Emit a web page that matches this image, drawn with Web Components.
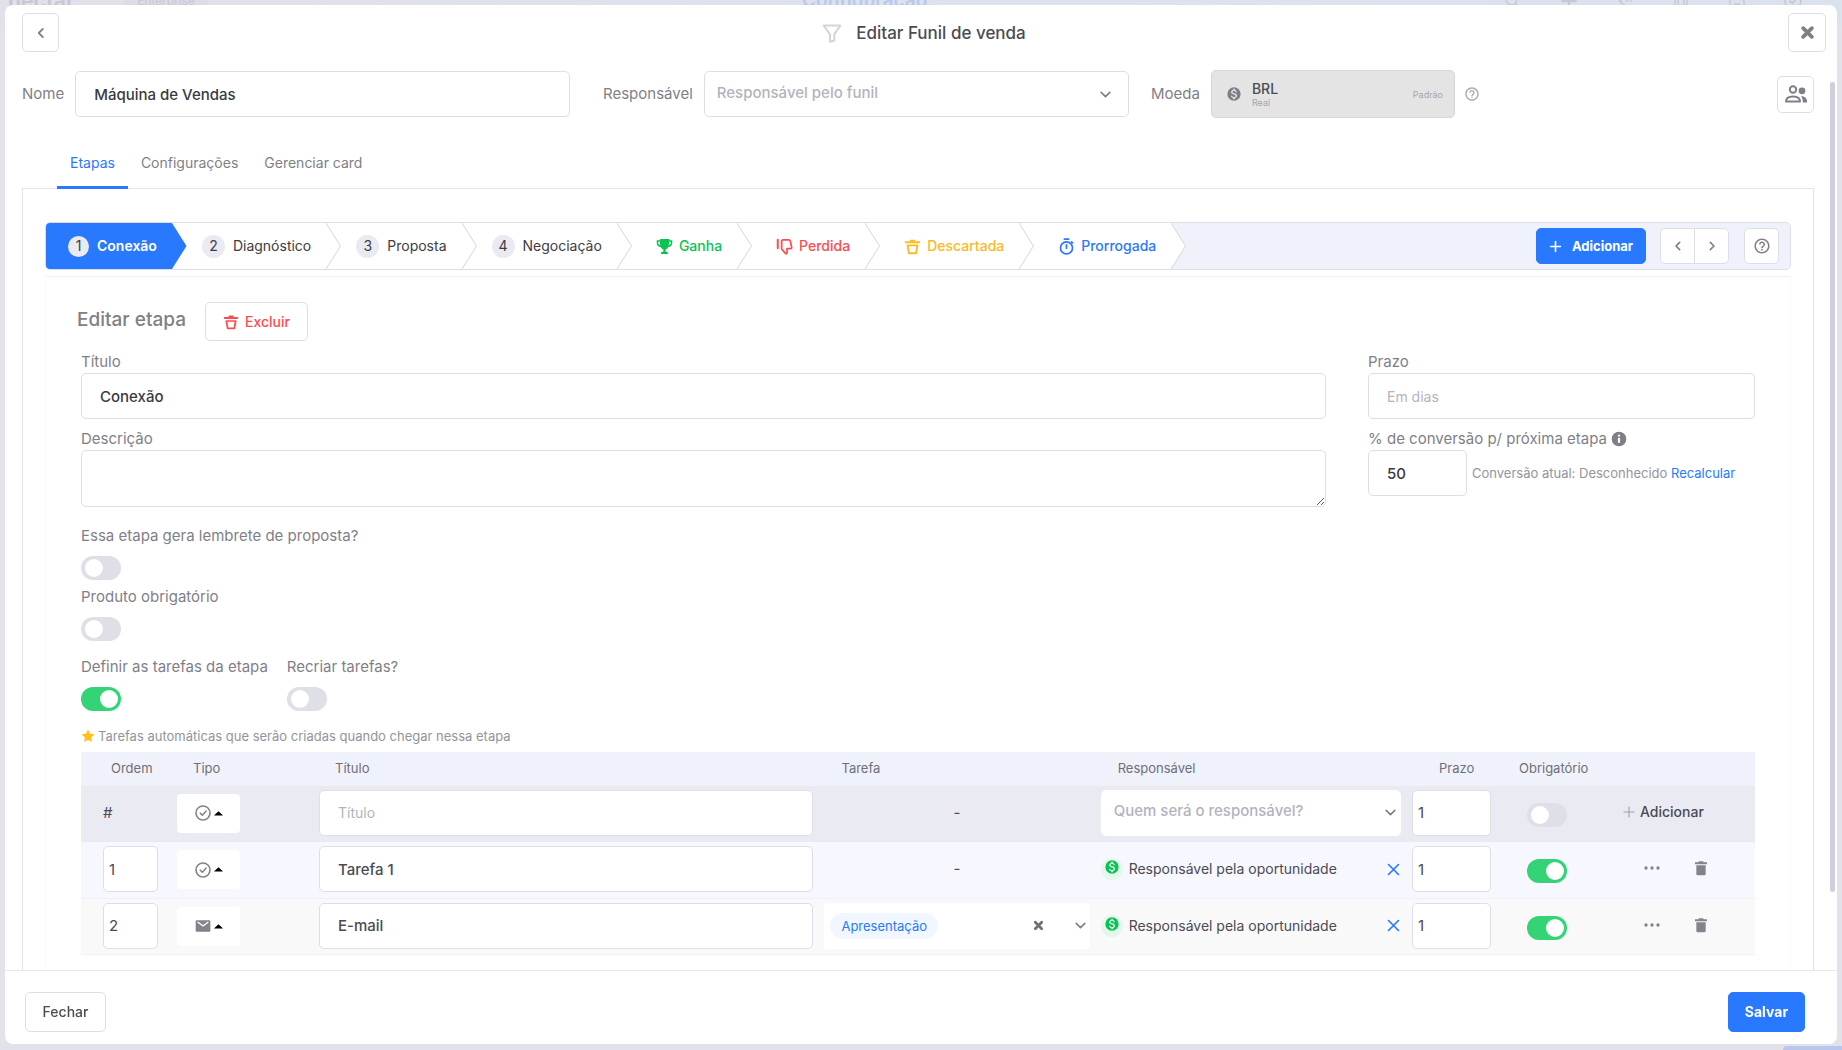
<!DOCTYPE html>
<html lang="pt-BR">
<head>
<meta charset="utf-8">
<title>Editar Funil de venda</title>
<style>
  html, body { height: 100%; }
  body {
    margin: 0;
    overflow: hidden;
    font-family: Inter, "Liberation Sans", sans-serif;
    font-size: 15px;
    line-height: 20px;
    color: #3f3f46;
    background: #e2e2eb;
    --line: #dedee7;
    --muted: #7f7f88;
    --soft: #b3b3bd;
    --ink: #3a3a40;
    --blue: #2979ff;
    --green: #34d375;
    --red: #ff4b4f;
  }
</style>
</head>
<body>
<app-backdrop></app-backdrop>
<funnel-dialog heading="Editar Funil de venda">
  <funnel-form slot="form"></funnel-form>
  <funnel-tabs slot="tabs"></funnel-tabs>
  <stage-panel slot="panel"></stage-panel>
</funnel-dialog>

<script>
const BASE = `
  *, *::before, *::after { box-sizing: border-box; }
  button, input, select, textarea { font: inherit; color: inherit; margin: 0; }
  button { cursor: pointer; padding: 0; border: 0; background: none; }
  input, select, textarea { outline: none; }
  ::placeholder { color: var(--soft); opacity: 1; }
`;

function define(name, render) {
  customElements.define(name, class extends HTMLElement {
    constructor() {
      super();
      this.attachShadow({ mode: 'open' });
    }
    connectedCallback() {
      const tpl = document.createElement('template');
      tpl.innerHTML = `<style>${BASE}</style>` + render(this);
      this.shadowRoot.replaceChildren(tpl.content.cloneNode(true));
    }
  });
}

const stroke = (d, w = 2) => `<path d="${d}" fill="none" stroke="currentColor" stroke-width="${w}" stroke-linecap="round" stroke-linejoin="round"/>`;
const fill = d => `<path d="${d}" fill="currentColor"/>`;
const ICONS = {
  left: stroke('M14.5 6.5 9 12l5.5 5.5', 2.4),
  right: stroke('M9.5 6.5 15 12l-5.5 5.5', 2.4),
  down: stroke('M4 8l8 8 8-8', 3),
  x: stroke('M4 4l16 16M20 4 4 20', 2.6),
  xbold: stroke('M5 5l14 14M19 5 5 19', 6),
  plus: stroke('M12 3v18M3 12h18', 3),
  plusthin: stroke('M12 2v20M2 12h20', 2.2),
  filter: `<path d="M2 3h20l-7.200 10.500v7.500l-5.200 1.500v-9z" fill="none" stroke="currentColor" stroke-width="2.400" stroke-linejoin="round"/>`,
  coin: fill('M12 2a10 10 0 1 0 0 20 10 10 0 0 0 0-20zm1.400 16.100V20h-2.700v-1.900c-1.700-.4-3.200-1.500-3.300-3.400h2c.1 1 .8 1.900 2.700 1.900 2 0 2.400-1 2.400-1.600 0-.9-.5-1.700-2.700-2.200-2.500-.6-4.200-1.600-4.200-3.700 0-1.700 1.400-2.800 3.100-3.200V4h2.700v1.900c1.900.5 2.800 1.900 2.900 3.400H14.300c0-1.100-.6-1.900-2.200-1.900-1.500 0-2.400.7-2.400 1.600 0 .8.600 1.400 2.700 1.900s4.200 1.400 4.200 3.900c0 1.800-1.400 2.900-3.200 3.300z'),
  help: fill('M11 18h2v-2h-2v2zm1-16C6.480 2 2 6.480 2 12s4.480 10 10 10 10-4.480 10-10S17.520 2 12 2zm0 18c-4.410 0-8-3.590-8-8s3.590-8 8-8 8 3.590 8 8-3.590 8-8 8zm0-14c-2.210 0-4 1.790-4 4h2c0-1.100.9-2 2-2s2 .9 2 2c0 2-3 1.750-3 5h2c0-2.250 3-2.500 3-5 0-2.210-1.790-4-4-4z'),
  info: fill('M12 1a11 11 0 1 0 0 22 11 11 0 0 0 0-22zm1.600 16.500h-3.200V10.200h3.200zm0-9.200h-3.200V5.500h3.200z'),
  people: `<circle cx="9" cy="7.500" r="3.200" fill="none" stroke="currentColor" stroke-width="2"/><circle cx="18" cy="8.800" r="3.400" fill="currentColor"/><path d="M2 19.500c0-3.800 2.600-5 7-5s7 1.200 7 5z" fill="none" stroke="currentColor" stroke-width="2" stroke-linejoin="round"/><path d="M17 14.200c3.800 0 6.200 1.800 6.200 6.300h-4.400c0-2.600-.4-4.600-1.800-6.300z" fill="currentColor"/>`,
  bin: stroke('M2.500 6h19', 2.8) + stroke('M9.500 3.600h5', 2.6) + `<path d="M5 10.500l2 11h10l2-11z" fill="none" stroke="currentColor" stroke-width="2.600" stroke-linejoin="round"/>`,
  trash: fill('M5 8h14v13a2 2 0 0 1-2 2H7a2 2 0 0 1-2-2zM3 3.500h5L9 2h6l1 1.500h5V6.500H3z'),
  trophy: fill('M18.500 3V1.500h-13V3H1v4c0 3.300 2.600 5.600 5.900 6 .9 1.700 2.100 2.800 3.600 3.200V19c-2 .2-3.500 1-3.500 2.700V22.500h10v-.8c0-1.700-1.500-2.500-3.500-2.700v-2.800c1.500-.4 2.700-1.500 3.600-3.200 3.300-.4 5.900-2.700 5.900-6V3zM3.200 7V5.200h2.300c0 2 .2 3.700.6 5.200C4.300 9.700 3.200 8.500 3.200 7zm17.600 0c0 1.500-1.100 2.700-2.900 3.400.4-1.500.6-3.200.6-5.200h2.300z'),
  thumb: stroke('M2.500 2.500v12', 2.8) + `<path d="M8 15.500V4.500a1.800 1.800 0 0 1 1.800-1.800h8.400a2 2 0 0 1 1.900 1.400l2 8.400c.3 1.400-.5 2.500-2 2.500h-4.600v6c0 .8-.5 1.300-1.200 1.300-.6 0-1-.3-1.300-.9z" fill="none" stroke="currentColor" stroke-width="2.400" stroke-linejoin="round"/>`,
  timer: stroke('M9 1.500h6', 2.6) + `<circle cx="12" cy="14" r="8.500" fill="none" stroke="currentColor" stroke-width="2.400"/>` + stroke('M12 9.500v5', 2.4) + stroke('M19 5.500l1.500 1.500', 2.4),
  check: `<circle cx="12" cy="12" r="10.500" fill="none" stroke="currentColor" stroke-width="2.400"/>` + stroke('M8 12.300l3 3 5.500-6', 2.4),
  mail: `<path fill="currentColor" d="M2.500 3.500h19a1.500 1.500 0 0 1 1.500 1.500v14a1.500 1.500 0 0 1-1.500 1.500h-19A1.500 1.500 0 0 1 1 19V5a1.500 1.500 0 0 1 1.500-1.500z"/><path d="M4 6l8 6 8-6" fill="none" stroke="#fff" stroke-width="2"/>`,
  caret: fill('M0 17 12 6l12 11z'),
  dots: fill('M3 9.500a2.500 2.500 0 1 0 0 5 2.500 2.500 0 0 0 0-5zm9 0a2.500 2.500 0 1 0 0 5 2.500 2.500 0 0 0 0-5zm9 0a2.500 2.500 0 1 0 0 5 2.500 2.500 0 0 0 0-5z'),
  star: fill('M12 1l3.300 7.200 7.700.9-5.700 5.400 1.500 7.800L12 18.400l-6.800 3.900 1.500-7.800L1 9.100l7.700-.9z'),
  search: `<circle cx="10" cy="10" r="7" fill="none" stroke="currentColor" stroke-width="2"/>` + stroke('M15.500 15.500 22 22'),
  phone: stroke('M4 8c0 6 7 11 16 12M4 8l3 5M14 12h1M19 12h1'),
  book: stroke('M4 2h4v20H4zM16 2h4v20h-4z'),
  bell: stroke('M2 20l1-9c1-5 4-8 9-8s8 3 9 8l1 9h-7v-4H9v4z'),
};

define('ui-icon', el => `
  <style>
    :host { display: inline-flex; flex: none; width: var(--size, 16px); height: var(--size, 16px); }
    svg { width: 100%; height: 100%; display: block; overflow: visible; }
  </style>
  <svg viewBox="0 0 24 24" aria-hidden="true">${ICONS[el.getAttribute('name')] || ''}</svg>`);

define('ui-button', el => `
  <style>
    :host { display: inline-flex; flex: none; }
    button {
      display: flex; align-items: center; justify-content: center;
      gap: var(--gap, 6px);
      min-width: var(--w, 0px);
      height: var(--h, 40px);
      border: 1px solid var(--line);
      border-radius: 5px;
      background: #fff;
      color: var(--fg, var(--muted));
      font-size: 14px;
      font-weight: 500;
      white-space: nowrap;
    }
    :host([kind="primary"]) button { background: var(--blue); border-color: var(--blue); color: #fff; font-weight: 700; font-size: var(--fs, 14px); }
  </style>
  <button type="button" aria-label="${el.getAttribute('label') || el.textContent.trim()}"><slot></slot></button>`);

define('ui-toggle', el => `
  <style>
    :host { display: inline-flex; flex-direction: column; gap: 9px; }
    label { color: var(--muted); line-height: 19px; padding-bottom: 2px; white-space: nowrap; }
    input {
      appearance: none; display: flex; align-items: center;
      width: 40px; height: 24px; padding: 0 4px; border-radius: 12px;
      background: #dfdfe7; cursor: pointer;
    }
    input::before { content: ""; width: 18px; height: 18px; border-radius: 50%; background: #fff; }
    input:checked { background: var(--green); justify-content: flex-end; padding: 0 3px; }
  </style>
  ${el.hasAttribute('label') ? `<label for="t">${el.getAttribute('label')}</label>` : ''}
  <input id="t" type="checkbox" role="switch" ${el.hasAttribute('on') ? 'checked' : ''} ${el.hasAttribute('label') ? '' : `aria-label="${el.getAttribute('name')}"`}>`);

const CONTROL = `
  .box {
    display: block; width: 100%; height: 46px; min-width: 0;
    border: 1px solid var(--line); border-radius: 5px; background: #fff;
    padding: 0 18px; font-size: 15px; font-weight: 500; color: var(--ink);
  }
  .box::placeholder { font-size: 14px; font-weight: 400; }
  .pick { display: grid; align-items: center; min-width: 0; }
  .pick > * { grid-area: 1 / 1; }
  .pick select { appearance: none; padding: 0 40px 3px 12px; color: var(--soft); font-weight: 500; font-size: 15px; }
  .pick ui-icon { --size: 13px; justify-self: end; margin-right: 17px; color: var(--muted); pointer-events: none; }
`;

define('ui-field', el => {
  const a = n => el.getAttribute(n) || '';
  let control = `<input id="c" class="box" type="text" value="${a('value')}" placeholder="${a('placeholder')}">`;
  if (a('kind') === 'area') control = `<textarea id="c" class="box"></textarea>`;
  if (a('kind') === 'select') control = `<span class="pick"><select id="c" class="box"><option>${a('placeholder')}</option></select><ui-icon name="down"></ui-icon></span>`;
  return `
  <style>
    ${CONTROL}
    :host { display: flex; flex-direction: column; min-width: 0; }
    :host([inline]) { flex-direction: row; align-items: center; gap: 11px; }
    label { color: var(--muted); line-height: 19px; padding-bottom: 2px; display: flex; align-items: center; gap: 4px; white-space: nowrap; }
    :host([inline]) .pick, :host([inline]) input { flex: 1; }
    textarea.box { height: 57px; padding: 12px 18px; resize: vertical; }
    .row { display: flex; align-items: center; gap: 5px; }
    .row .box { width: var(--control-width, 100%); flex: 0 0 auto; }
  </style>
  <label for="c">${a('label')}<slot name="hint"></slot></label>
  ${el.hasAttribute('inline') ? control : `<div class="row">${control}<slot></slot></div>`}`;
});

define('app-backdrop', () => `
  <style>
    :host { display: block; color: #c8c8d2; }
    header { display: flex; align-items: center; height: 50px; margin-top: -24px; background: linear-gradient(to right, #e1e1ea, #dae2ed); padding: 0 8px; }
    .brand { font-size: 21px; font-weight: 700; width: 116px; line-height: 30px; }
    .plan { font-size: 12px; background: #dcdce6; padding: 0 13px; border-radius: 8px; line-height: 24px; }
    .page { flex: 1; font-size: 19px; font-weight: 600; color: #b9c8ef; padding-left: 594px; }
    nav { display: flex; gap: 38px; padding-right: 32px; }
    ui-icon { --size: 18px; }
    .chat { position: fixed; right: 0; bottom: 0; width: 59px; height: 4px; background: #b9c6ee; border-top-left-radius: 4px; }
  </style>
  <header>
    <span class="brand">nectar</span><span class="plan">Enterprise</span><span class="page">Configuração</span>
    <nav><ui-icon name="search"></ui-icon><ui-icon name="plus"></ui-icon><ui-icon name="phone"></ui-icon><ui-icon name="book"></ui-icon><ui-icon name="bell"></ui-icon><ui-icon name="check"></ui-icon></nav>
  </header>
  <div class="chat"></div>`);

define('funnel-dialog', el => `
  <style>
    :host {
      position: fixed; inset: 5px 5px 6px 5px;
      display: flex; flex-direction: column;
      background: #fff; border-radius: 8px; overflow: hidden;
    }
    header { display: grid; grid-template-columns: 1fr auto 1fr; align-items: center; padding: 8px 11px 18px 17px; }
    header ui-button { --w: 37px; --h: 39px; }
    header ui-button:last-child { justify-self: end; --w: 38px; }
    header ui-button:first-child ui-icon { --size: 18px; }
    header ui-button:last-child ui-icon { --size: 15px; }
    h1 { margin: 0; display: flex; align-items: center; gap: 14px; font-size: 17px; font-weight: 500; line-height: 24px; color: #4b4b52; }
    h1 ui-icon { --size: 20px; color: #d3d3dc; }
    main { flex: 1; min-height: 0; display: flex; flex-direction: column; padding: 0 23px 0 17px; overflow: hidden; }
    footer { flex: none; display: flex; justify-content: space-between; padding: 21px 32px 12px 20px; border-top: 1px solid #e6e6ef; }
    footer ui-button:first-child { --w: 81px; --fg: #4b4b52; }
    footer ui-button:last-child { --w: 77px; }
    .thumb { position: absolute; right: 2px; top: 77px; width: 5px; height: 78%; border-radius: 3px; background: #cfceda; }
  </style>
  <header>
    <ui-button label="Voltar"><ui-icon name="left"></ui-icon></ui-button>
    <h1><ui-icon name="filter"></ui-icon>${el.getAttribute('heading')}</h1>
    <ui-button label="Fechar janela"><ui-icon name="xbold"></ui-icon></ui-button>
  </header>
  <main>
    <slot name="form"></slot>
    <slot name="tabs"></slot>
    <slot name="panel"></slot>
  </main>
  <footer>
    <ui-button>Fechar</ui-button>
    <ui-button kind="primary">Salvar</ui-button>
  </footer>
  <div class="thumb"></div>`);

define('funnel-form', () => `
  <style>
    :host { display: grid; grid-template-columns: 548fr 537fr 304fr 337fr; column-gap: 22px; align-items: center; }
    .owner { padding-left: 11px; }
    .currency { display: flex; align-items: center; gap: 11px; color: var(--muted); }
    .currency button {
      flex: 1; display: flex; align-items: center; gap: 10px; height: 48px; text-align: left;
      padding: 0 11px 0 14px; border: 1px solid #d6d6d8; border-radius: 5px; background: #e4e4e4;
    }
    .currency button ui-icon { --size: 16px; }
    .names { flex: 1; display: flex; flex-direction: column; }
    b { font-size: 14px; font-weight: 500; line-height: 17px; color: #4b4b52; }
    small { font-size: 9px; line-height: 11px; color: #a6a6ae; }
    .end { display: flex; justify-content: space-between; align-items: center; margin-left: -13px; color: #a6a6ae; }
    .end > ui-icon { --size: 16px; }
    .end ui-button { --w: 37px; --h: 37px; }
    .end ui-button ui-icon { --size: 24px; }
  </style>
  <ui-field inline label="Nome" value="Máquina de Vendas"></ui-field>
  <ui-field class="owner" inline kind="select" label="Responsável" placeholder="Responsável pelo funil"></ui-field>
  <div class="currency"><span id="cur">Moeda</span>
    <button type="button" aria-labelledby="cur" disabled>
      <ui-icon name="coin"></ui-icon>
      <span class="names"><b>BRL</b><small>Real</small></span>
      <small>Padrão</small>
    </button>
  </div>
  <div class="end"><ui-icon name="help"></ui-icon><ui-button label="Equipe"><ui-icon name="people"></ui-icon></ui-button></div>`);

define('funnel-tabs', () => `
  <style>
    :host { display: flex; align-items: flex-end; height: 71px; padding-left: 35px; margin-bottom: -1px; position: relative; }
    button { height: 44px; padding: 0 13px 5px; font-size: 14px; color: var(--muted); border-bottom: 3px solid transparent; }
    button[aria-selected="true"] { color: var(--blue); border-color: var(--blue); border-radius: 2px 2px 0 0; }
  </style>
  <button role="tab" aria-selected="true">Etapas</button>
  <button role="tab" aria-selected="false">Configurações</button>
  <button role="tab" aria-selected="false">Gerenciar card</button>`);

define('stage-step', el => `
  <style>
    :host { display: flex; flex: none; color: #3d3d42; }
    button { display: flex; align-items: center; gap: 8px; height: 46px; padding: 0 15px; background: #fff; font-size: 14px; white-space: nowrap; }
    i { width: 23px; height: 23px; border-radius: 50%; background: #eaeaf2; color: #3d3d42; font-style: normal; font-weight: 400; display: grid; place-items: center; }
    svg { width: 15px; height: 46px; flex: none; display: block; background: #fff; }
    path { fill: #fff; stroke: #d5d5db; }
    :host([icon]) button { padding: 0 15px 0 24px; gap: 6px; font-weight: 500; }
    :host([icon]) ui-icon { --size: 17px; }
    :host([active]) { background: #fff; border-radius: 4px 0 0 4px; overflow: hidden; }
    :host([active]) button { padding-left: 22px; background: var(--blue); color: #fff; font-weight: 600; }
    :host([active]) i { width: 21px; height: 21px; }
    :host([active]) path { fill: var(--blue); stroke: none; }
    :host([last]) svg { background: none; }
  </style>
  <button type="button" ${el.hasAttribute('active') ? 'aria-current="step"' : ''}>
    ${el.hasAttribute('icon') ? `<ui-icon name="${el.getAttribute('icon')}"></ui-icon>` : `<i>${el.getAttribute('n')}</i>`}
    <slot></slot>
  </button>
  <svg viewBox="0 0 15 46" preserveAspectRatio="none" aria-hidden="true"><path d="M0 0 14.500 23 0 46"/></svg>`);

define('stage-bar', () => `
  <style>
    :host { display: flex; align-items: center; justify-content: space-between; border: 1px solid #dcdfe8; border-radius: 5px; background: #eff2fa; height: 48px; }
    .steps, .tools, .pair { display: flex; }
    .won { color: #0cc254; }
    .lost { color: #ff4b4f; }
    .dropped { color: #fdb924; }
    .delayed { color: #2979ff; }
    .tools { padding-right: 11px; align-items: center; }
    .tools > ui-button { --h: 36px; --w: 35px; }
    .tools > ui-button[kind] { --w: 110px; --fs: 13px; --gap: 10px; margin-right: 14px; }
    .tools > ui-button[kind] ui-icon { --size: 13px; }
    .pair { margin-right: 15px; border: 1px solid var(--line); border-radius: 5px; background: #fff; height: 36px; }
    .pair button { width: 33px; display: grid; place-items: center; color: var(--muted); }
    .pair button + button { width: 34px; border-left: 1px solid var(--line); }
    .tools > ui-button:last-child ui-icon { --size: 18px; }
  </style>
  <div class="steps">
    <stage-step n="1" active>Conexão</stage-step>
    <stage-step n="2">Diagnóstico</stage-step>
    <stage-step n="3">Proposta</stage-step>
    <stage-step n="4">Negociação</stage-step>
    <stage-step icon="trophy" class="won">Ganha</stage-step>
    <stage-step icon="thumb" class="lost">Perdida</stage-step>
    <stage-step icon="bin" class="dropped">Descartada</stage-step>
    <stage-step icon="timer" last class="delayed">Prorrogada</stage-step>
  </div>
  <div class="tools">
    <ui-button kind="primary"><ui-icon name="plus"></ui-icon>Adicionar</ui-button>
    <span class="pair"><button type="button" aria-label="Anterior"><ui-icon name="left"></ui-icon></button><button type="button" aria-label="Próxima"><ui-icon name="right"></ui-icon></button></span>
    <ui-button label="Ajuda"><ui-icon name="help"></ui-icon></ui-button>
  </div>`);

define('stage-panel', () => `
  <style>
    :host { flex: 1; display: flex; flex-direction: column; min-height: 0; border: 1px solid #e3e3ea; border-bottom: 0; padding: 33px 22px 0; }
    .edit { flex: 1; margin-top: 6px; border: 1px solid #fafafb; border-top-color: #f1f1f4; border-bottom: 0; padding: 25px 35px 0; }
    .head { display: flex; align-items: center; gap: 19px; margin-left: -4px; }
    h2 { margin: 0; font-size: 19px; font-weight: 500; line-height: 24px; padding-bottom: 3px; color: var(--muted); }
    .head ui-button { --w: 103px; --h: 39px; --fg: var(--red); --gap: 6px; }
    .head ui-icon { --size: 16px; }
    .grid { display: grid; grid-template-columns: 1245fr 387fr; column-gap: 42px; margin-top: 11px; }
    .col { display: flex; flex-direction: column; gap: 10px; }
    .narrow { --control-width: 99px; }
    ui-icon[name="info"] { color: var(--muted); }
    .rate { font-size: 13px; color: #94949c; white-space: nowrap; }
    a { color: var(--blue); text-decoration: none; }
    .flags { display: flex; flex-direction: column; align-items: flex-start; gap: 7px; margin-top: 19px; }
    .tasks { display: flex; gap: 19px; margin-top: 16px; }
    .note { display: flex; align-items: center; gap: 3px; margin: 15px 0 6px; font-size: 13px; color: #94949c; }
    .note ui-icon { --size: 14px; color: #ffbf1a; }
  </style>
  <stage-bar></stage-bar>
  <section class="edit">
    <div class="head"><h2>Editar etapa</h2><ui-button><ui-icon name="bin"></ui-icon>Excluir</ui-button></div>
    <div class="grid">
      <div class="col">
        <ui-field label="Título" value="Conexão"></ui-field>
        <ui-field label="Descrição" kind="area"></ui-field>
      </div>
      <div class="col">
        <ui-field label="Prazo" placeholder="Em dias"></ui-field>
        <ui-field class="narrow" label="% de conversão p/ próxima etapa" value="50">
          <ui-icon slot="hint" name="info"></ui-icon>
          <span class="rate">Conversão atual: Desconhecido <a href="#">Recalcular</a></span>
        </ui-field>
      </div>
    </div>
    <div class="flags">
      <ui-toggle label="Essa etapa gera lembrete de proposta?"></ui-toggle>
      <ui-toggle label="Produto obrigatório"></ui-toggle>
    </div>
    <div class="tasks">
      <ui-toggle label="Definir as tarefas da etapa" on></ui-toggle>
      <ui-toggle label="Recriar tarefas?"></ui-toggle>
    </div>
    <p class="note"><ui-icon name="star"></ui-icon>Tarefas automáticas que serão criadas quando chegar nessa etapa</p>
    <task-table></task-table>
  </section>`);

const TASKS = [
  { order: 1, type: 'check', title: 'Tarefa 1' },
  { order: 2, type: 'mail', title: 'E-mail', task: 'Apresentação' },
];
const typeButton = t => `<button type="button" class="type" aria-label="Tipo"><ui-icon name="${t}"></ui-icon><ui-icon class="caret" name="caret"></ui-icon></button>`;
const taskRow = t => `
  <tr>
    <td class="order"><input class="box short" aria-label="Ordem" value="${t.order}"></td>
    <td>${typeButton(t.type)}</td>
    <td><input class="box" aria-label="Título" value="${t.title}"></td>
    <td>${t.task ? `<div class="multi"><span class="chip">${t.task}</span><button type="button" aria-label="Limpar"><ui-icon name="xbold"></ui-icon></button><button type="button" aria-label="Abrir lista"><ui-icon name="down"></ui-icon></button></div>` : '<div class="cell dash">-</div>'}</td>
    <td><div class="cell owner"><span class="badge"><ui-icon name="coin"></ui-icon></span><span>Responsável pela oportunidade</span><button type="button" aria-label="Remover responsável"><ui-icon name="x"></ui-icon></button></div></td>
    <td><input class="box short" aria-label="Prazo" value="1"></td>
    <td class="req"><ui-toggle name="Obrigatório" on></ui-toggle></td>
    <td><div class="cell acts"><button type="button" aria-label="Mais"><ui-icon name="dots"></ui-icon></button><button type="button" aria-label="Excluir"><ui-icon name="trash"></ui-icon></button></div></td>
  </tr>`;

define('task-table', () => `
  <style>
    ${CONTROL}
    :host { display: block; }
    table { width: 100%; table-layout: fixed; border-collapse: collapse; }
    th { height: 33px; padding: 0 0 0 22px; background: #eff2fa; font-size: 13px; font-weight: 400; text-align: left; color: #6f6f78; }
    th:first-child { padding-left: 30px; }
    th.due { padding-left: 32px; }
    td { height: 56px; padding: 4px 6px 0 5px; vertical-align: top; color: #4b4b52; }
    td:nth-child(3) { padding-left: 6px; }
    tr.new td { height: 57px; background: #eaeaf3; }
    tr { background: #f6f7ff; border-bottom: 1px solid #f0f1f8; }
    tr:last-child { background: #f9f9f9; }
    tr.new { border-bottom: 0; }
    td.order { padding-left: 22px; padding-right: 13px; }
    .box { color: #4b4b52; }
    .box.short { padding: 0 5px; font-weight: 400; }
    .cell { height: 46px; display: flex; align-items: center; }
    .dash { justify-content: center; }
    .type { display: flex; align-items: center; justify-content: center; gap: 3px; width: 63px; height: 39px; margin: 4px 0 0 1px; border-radius: 4px; background: #fff; color: #83838c; padding: 0 8px; }
    .type ui-icon { --size: 16px; }
    .type .caret { --size: 9px; color: #000; }
    .pick select { border-color: #fff; }
    .pick ui-icon { margin-right: 4px; }
    .multi { height: 46px; display: flex; align-items: center; background: #fff; border-radius: 4px; padding: 0 3px 0 6px; }
    .chip { background: #f2f7ff; color: var(--blue); font-size: 13px; line-height: 26px; border-radius: 13px; padding: 0 11px; margin-right: auto; }
    .multi button { color: var(--muted); display: flex; }
    .multi button:nth-child(2) { margin-right: 30px; }
    .multi ui-icon { --size: 13px; }
    .multi ui-icon[name="xbold"] { --size: 11px; color: #6f6f74; }
    .owner { gap: 6px; font-size: 14px; }
    .badge { width: 22px; height: 22px; border-radius: 50%; background: #e4f7ec; color: #0cc254; display: flex; justify-content: center; padding-top: 1px; }
    .badge ui-icon { --size: 16px; }
    .owner button { margin-left: auto; color: var(--blue); display: flex; }
    .owner button ui-icon { --size: 15px; }
    .req { padding: 17px 0 0 30px; }
    .acts { gap: 33px; padding: 0 0 2px 40px; color: #83838c; }
    .acts button { display: flex; }
    .add { display: flex; align-items: center; gap: 5px; height: 46px; margin-left: 19px; padding-bottom: 2px; font-size: 14px; font-weight: 500; color: #4b4b52; }
    .add ui-icon { --size: 12px; color: #a0a0a9; }
  </style>
  <table>
    <colgroup>
      <col style="width:90px"><col style="width:142px"><col><col style="width:16.5%">
      <col style="width:18.6%"><col style="width:90px"><col style="width:102px"><col style="width:156px">
    </colgroup>
    <thead><tr><th>Ordem</th><th>Tipo</th><th>Título</th><th>Tarefa</th><th>Responsável</th><th class="due">Prazo</th><th>Obrigatório</th><th aria-label="Ações"></th></tr></thead>
    <tbody>
      <tr class="new">
        <td class="order"><div class="cell">#</div></td>
        <td>${typeButton('check')}</td>
        <td><input class="box" aria-label="Título" placeholder="Título"></td>
        <td><div class="cell dash">-</div></td>
        <td><span class="pick"><select class="box" aria-label="Responsável"><option>Quem será o responsável?</option></select><ui-icon name="down"></ui-icon></span></td>
        <td><input class="box short" aria-label="Prazo" value="1"></td>
        <td class="req"><ui-toggle name="Obrigatório"></ui-toggle></td>
        <td><button type="button" class="add"><ui-icon name="plusthin"></ui-icon>Adicionar</button></td>
      </tr>
      ${TASKS.map(taskRow).join('')}
    </tbody>
  </table>`);
</script>
</body>
</html>
